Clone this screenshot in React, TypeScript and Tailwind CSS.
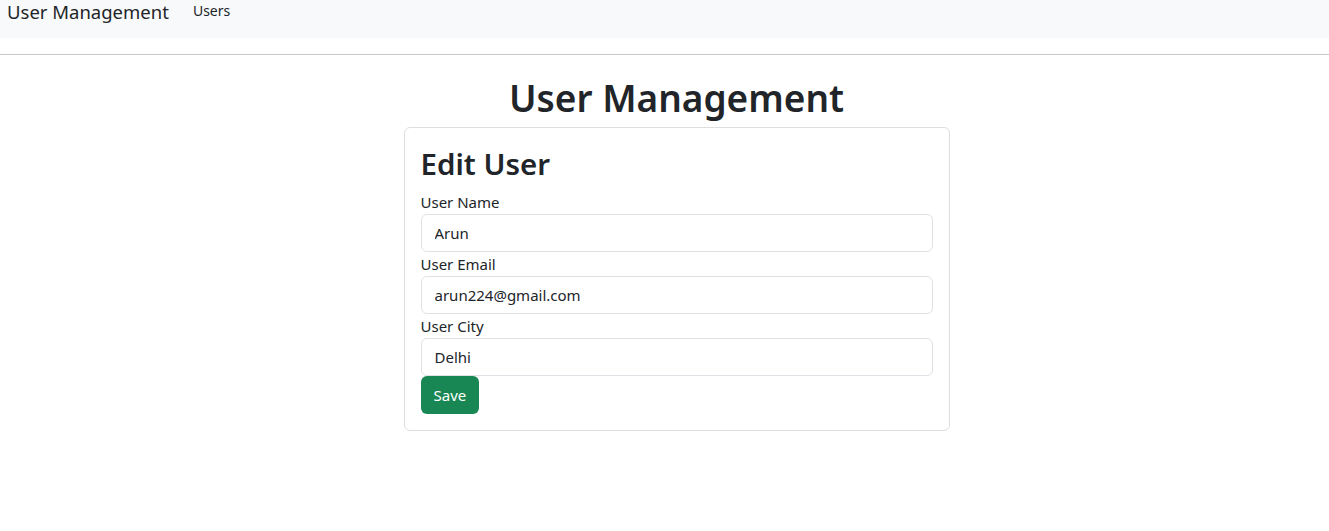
import React from "react";

export default function App() {
  const fields = [
    { label: "User Name", value: "Arun" },
    { label: "User Email", value: "arun224@gmail.com" },
    { label: "User City", value: "Delhi" },
  ];

  return (
    <div className="min-h-screen bg-white text-[#212529] font-['Noto_Sans',sans-serif]">
      {/* Navbar */}
      <nav className="h-[38px] bg-[#f8f9fa] flex items-start pl-[7px]">
        <span className="text-[18.5px] leading-[24px] mr-[24px]">User Management</span>
        <span className="text-[14px] leading-[22px]">Users</span>
      </nav>
      <hr className="mt-[16px] border-t border-[#c8c8c8]" />

      {/* Content */}
      <div className="pl-[24px]">
        <h1 className="text-center text-[37px] font-semibold leading-[44px] mt-[21px] mb-[7px]">
          User Management
        </h1>
        <div className="w-[546px] mx-auto border border-[#dedede] rounded-[6px] p-[16px]">
          <h2 className="text-[29.5px] font-semibold leading-[36px] mt-[2px] mb-[8px]">Edit User</h2>
          <form>
            {fields.map((f) => (
              <div key={f.label}>
                <label className="block text-[15px] leading-[24px]">{f.label}</label>
                <input
                  readOnly
                  value={f.value}
                  className="block w-full h-[38px] border border-[#dee2e6] rounded-[6px] px-[13px] text-[15px] text-[#212529] outline-none"
                />
              </div>
            ))}
            <button
              type="button"
              className="h-[38px] px-[13px] bg-[#198754] text-white text-[15px] rounded-[6px]"
            >
              Save
            </button>
          </form>
        </div>
      </div>
    </div>
  );
}
